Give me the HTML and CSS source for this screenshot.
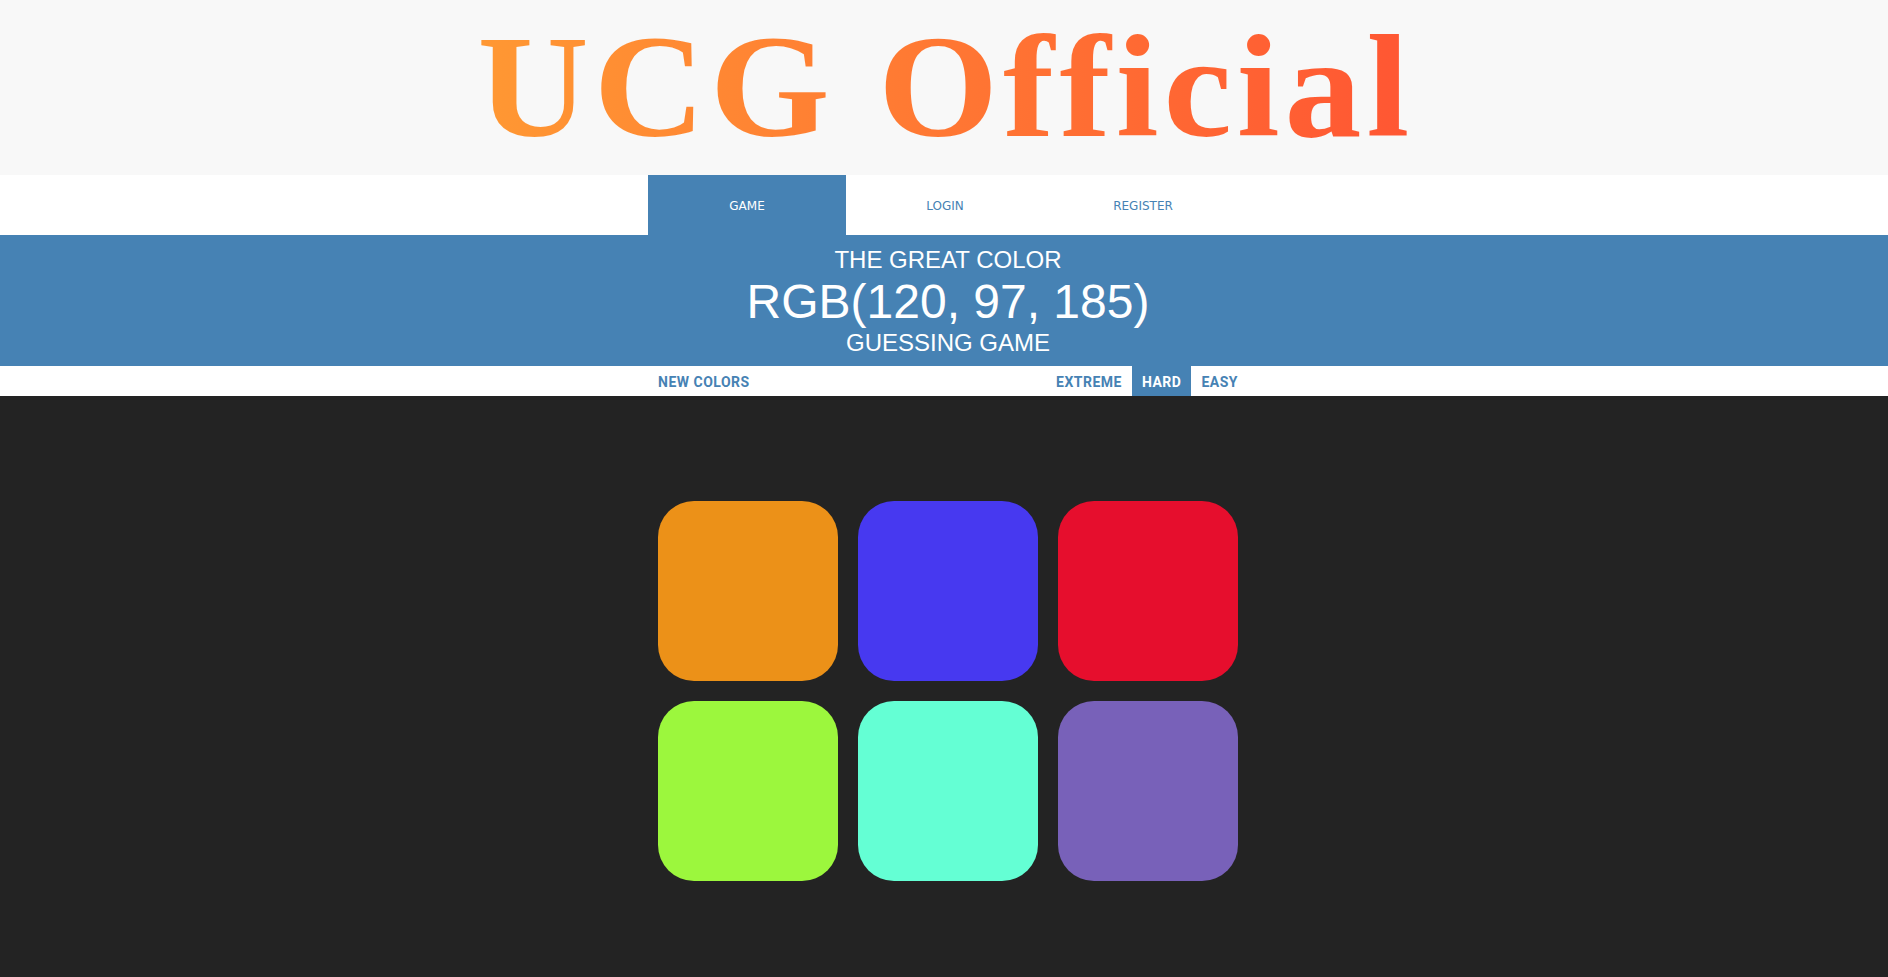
FILE: index.html
```html
<!DOCTYPE html>
<html lang="en">
<head>
<meta charset="utf-8">
<title>UCG Official - Color Game</title>
<link rel="stylesheet" href="styles.css">
</head>
<body>
<header class="site-header">
  <h1 class="brand">UCG Official</h1>
</header>
<nav class="main-nav">
  <div class="inner tabs">
    <a class="tab active" href="#">GAME</a>
    <a class="tab" href="#">LOGIN</a>
    <a class="tab" href="#">REGISTER</a>
  </div>
</nav>
<section class="banner">
  <div class="inner">
    <h2 class="headline">
      <span class="line-sm">THE GREAT COLOR</span>
      <span class="color-display">RGB(120, 97, 185)</span>
      <span class="line-sm">GUESSING GAME</span>
    </h2>
  </div>
</section>
<div class="stripe">
  <div class="inner controls">
    <button class="btn">NEW COLORS</button>
    <span class="message"></span>
    <div class="modes">
      <button class="btn">EXTREME</button>
      <button class="btn selected">HARD</button>
      <button class="btn">EASY</button>
    </div>
  </div>
</div>
<main class="board">
  <div class="grid">
    <div class="square" style="background: rgb(236, 145, 24);"></div>
    <div class="square" style="background: rgb(71, 57, 240);"></div>
    <div class="square" style="background: rgb(230, 14, 45);"></div>
    <div class="square" style="background: rgb(156, 247, 61);"></div>
    <div class="square" style="background: rgb(100, 255, 212);"></div>
    <div class="square" style="background: rgb(120, 97, 185);"></div>
  </div>
</main>
</body>
</html>
```

FILE: styles.css
```css
html, body {
  margin: 0;
  padding: 0;
}

body {
  background: #232323;
  font-family: "Liberation Sans", Arial, sans-serif;
  min-height: 977px;
}

.inner {
  max-width: 600px;
  margin: 0 auto;
  padding-left: 8px;
}

/* header */
.site-header {
  background: #f8f8f8;
  height: 175px;
  display: flex;
  justify-content: center;
  padding-left: 4px;
  box-sizing: border-box;
  overflow: hidden;
}

.brand {
  margin: 0;
  height: 175px;
  box-sizing: border-box;
  padding-bottom: 6px;
  line-height: 169px;
  white-space: nowrap;
  font-family: "Liberation Serif", "Times New Roman", serif;
  font-weight: bold;
  font-size: 154px;
  letter-spacing: 5px;
  background: linear-gradient(to right, #ff9833, #ff5633);
  -webkit-background-clip: text;
  background-clip: text;
  color: transparent;
  transform: scaleY(0.95);
  transform-origin: 50% 139px;
}

/* nav */
.main-nav {
  background: #ffffff;
  height: 60px;
}

.tabs {
  display: flex;
  height: 60px;
}

.tab {
  width: 198px;
  display: flex;
  align-items: center;
  justify-content: center;
  padding-top: 1px;
  text-decoration: none;
  color: steelblue;
  font-family: "DejaVu Sans", Verdana, sans-serif;
  font-size: 12px;
}

.tab.active {
  background: steelblue;
  color: #ffffff;
}

/* banner */
.banner {
  background: steelblue;
  height: 131px;
  box-sizing: border-box;
  padding-top: 12px;
}

.headline {
  margin: 0;
  font-weight: normal;
  color: #ffffff;
  text-align: center;
  text-transform: uppercase;
}

.line-sm {
  display: block;
  font-size: 24px;
  line-height: 26px;
}

.color-display {
  display: block;
  font-size: 48px;
  line-height: 57px;
}

/* control stripe */
.stripe {
  background: #ffffff;
  height: 30px;
}

.controls {
  display: flex;
  align-items: stretch;
  height: 30px;
}

.message {
  flex: 1;
}

.modes {
  display: flex;
}

.btn {
  border: none;
  background: none;
  margin: 0;
  padding: 1px 10px 0;
  height: 30px;
  font-family: Roboto, "Liberation Sans", sans-serif;
  font-weight: 700;
  font-size: 14px;
  letter-spacing: 0.5px;
  color: steelblue;
  text-transform: uppercase;
  cursor: pointer;
}

.btn.selected {
  background: steelblue;
  color: #ffffff;
}

/* board */
.board {
  padding-top: 105px;
}

.grid {
  display: grid;
  grid-template-columns: repeat(3, 180px);
  gap: 20px;
  width: 580px;
  padding-left: 8px;
  margin: 0 auto;
}

.square {
  width: 180px;
  height: 180px;
  border-radius: 20%;
}
```
